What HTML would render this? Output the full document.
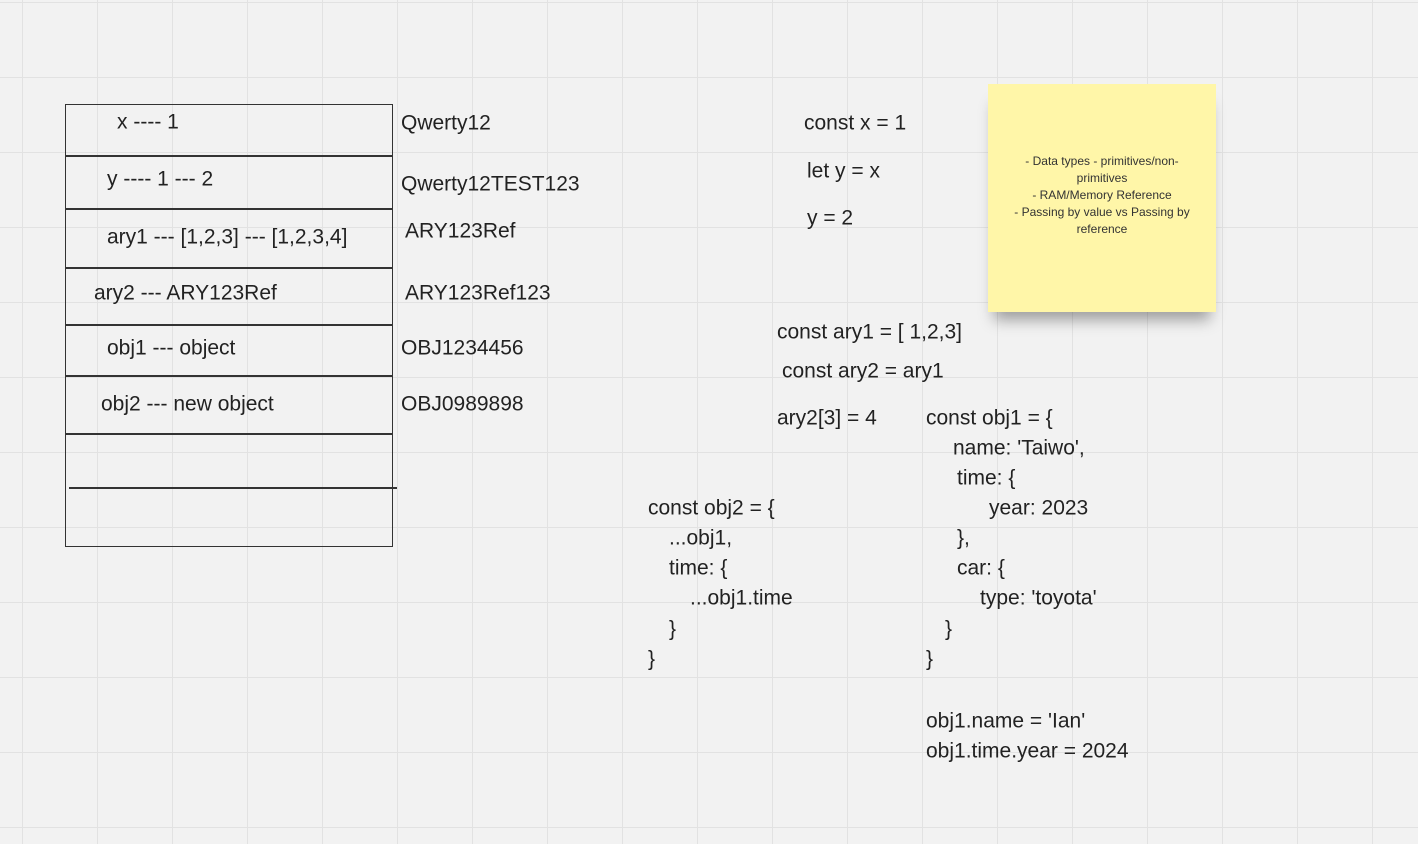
<!DOCTYPE html>
<html><head><meta charset="utf-8"><style>
html,body{margin:0;padding:0}
body{width:1418px;height:844px;overflow:hidden;position:relative;background-color:#f2f2f2;
background-image:linear-gradient(to right,#e2e2e2 1px,transparent 1px),linear-gradient(to bottom,#e2e2e2 1px,transparent 1px);
background-size:75px 75px;background-position:22px 2px;font-family:"Liberation Sans",sans-serif;color:#222}
.t{position:absolute;font-size:21px;line-height:21px;white-space:pre;transform:translateY(-9.5px)}
.h{position:absolute;height:1.5px;background:#333}
.box{position:absolute;left:65px;top:104px;width:326px;height:441px;border:1.5px solid #333}
.sticky{position:absolute;left:988px;top:84px;width:228px;height:228px;background:#fff6a8;box-shadow:0 14px 14px -6px rgba(0,0,0,0.35);
display:flex;align-items:center;justify-content:center;text-align:center;font-size:12px;line-height:17px;color:#333;padding:0 18px 6px;box-sizing:border-box}
</style></head><body>
<div class="box"></div>
<div class="h" style="left:65px;top:155px;width:328px"></div>
<div class="h" style="left:65px;top:208px;width:328px"></div>
<div class="h" style="left:65px;top:267px;width:328px"></div>
<div class="h" style="left:65px;top:324px;width:328px"></div>
<div class="h" style="left:65px;top:375px;width:328px"></div>
<div class="h" style="left:65px;top:433px;width:328px"></div>
<div class="h" style="left:69px;top:487px;width:328px"></div>

<div class="t" style="left:117px;top:121px">x ---- 1</div>
<div class="t" style="left:107px;top:178px">y ---- 1 --- 2</div>
<div class="t" style="left:107px;top:236px">ary1 --- [1,2,3] --- [1,2,3,4]</div>
<div class="t" style="left:94px;top:292px">ary2 --- ARY123Ref</div>
<div class="t" style="left:107px;top:347px">obj1 --- object</div>
<div class="t" style="left:101px;top:403px">obj2 --- new object</div>

<div class="t" style="left:401px;top:122px">Qwerty12</div>
<div class="t" style="left:401px;top:183px">Qwerty12TEST123</div>
<div class="t" style="left:405px;top:230px">ARY123Ref</div>
<div class="t" style="left:405px;top:292px">ARY123Ref123</div>
<div class="t" style="left:401px;top:347px">OBJ1234456</div>
<div class="t" style="left:401px;top:403px">OBJ0989898</div>

<div class="t" style="left:804px;top:122px">const x = 1</div>
<div class="t" style="left:807px;top:170px">let y = x</div>
<div class="t" style="left:807px;top:217px">y = 2</div>
<div class="t" style="left:777px;top:331px">const ary1 = [ 1,2,3]</div>
<div class="t" style="left:782px;top:370px">const ary2 = ary1</div>
<div class="t" style="left:777px;top:417px">ary2[3] = 4</div>

<div class="t" style="left:926px;top:417px">const obj1 = {</div>
<div class="t" style="left:953px;top:447px">name: 'Taiwo',</div>
<div class="t" style="left:957px;top:477px">time: {</div>
<div class="t" style="left:989px;top:507px">year: 2023</div>
<div class="t" style="left:957px;top:537px">},</div>
<div class="t" style="left:957px;top:567px">car: {</div>
<div class="t" style="left:980px;top:597px">type: 'toyota'</div>
<div class="t" style="left:945px;top:628px">}</div>
<div class="t" style="left:926px;top:658px">}</div>
<div class="t" style="left:926px;top:720px">obj1.name = 'Ian'</div>
<div class="t" style="left:926px;top:750px">obj1.time.year = 2024</div>

<div class="t" style="left:648px;top:507px">const obj2 = {</div>
<div class="t" style="left:669px;top:537px">...obj1,</div>
<div class="t" style="left:669px;top:567px">time: {</div>
<div class="t" style="left:690px;top:597px">...obj1.time</div>
<div class="t" style="left:669px;top:628px">}</div>
<div class="t" style="left:648px;top:658px">}</div>

<div class="sticky"><div>- Data types - primitives/non-primitives<br>- RAM/Memory Reference<br>- Passing by value vs Passing by reference</div></div>
</body></html>
